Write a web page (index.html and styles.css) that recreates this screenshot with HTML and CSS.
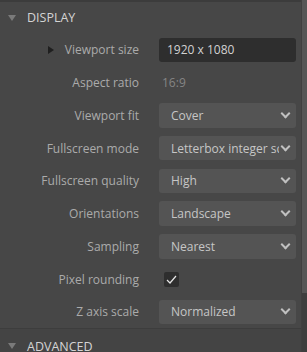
FILE: index.html
```html
<!DOCTYPE html>
<html lang="en">
<head>
    <meta charset="UTF-8">
    <meta name="viewport" content="width=device-width, initial-scale=1.0">
    <title>Project settings</title>
    <link rel="stylesheet" href="styles.css">
</head>
<body>
    <div class="panel">
        <div class="content">
            <div class="section-head">
                <span class="caret"></span>
                <span class="section-title">DISPLAY</span>
            </div>

            <div class="props">
                <div class="label"><span class="expander"></span>Viewport size</div>
                <div class="control"><div class="textbox">1920 x 1080</div></div>

                <div class="label">Aspect ratio</div>
                <div class="control"><span class="readonly">16:9</span></div>

                <div class="label">Viewport fit</div>
                <div class="control"><div class="dropdown"><span class="value">Cover</span><span class="chev"></span></div></div>

                <div class="label">Fullscreen mode</div>
                <div class="control"><div class="dropdown"><span class="value">Letterbox integer scale</span><span class="chev"></span></div></div>

                <div class="label">Fullscreen quality</div>
                <div class="control"><div class="dropdown"><span class="value">High</span><span class="chev"></span></div></div>

                <div class="label">Orientations</div>
                <div class="control"><div class="dropdown"><span class="value">Landscape</span><span class="chev"></span></div></div>

                <div class="label">Sampling</div>
                <div class="control"><div class="dropdown"><span class="value">Nearest</span><span class="chev"></span></div></div>

                <div class="label">Pixel rounding</div>
                <div class="control">
                    <div class="checkbox">
                        <svg width="11" height="9" viewBox="0 0 11 9"><path d="M1 5 L4 8 L10 1" fill="none" stroke="#e6e6e6" stroke-width="1.2"/></svg>
                    </div>
                </div>

                <div class="label">Z axis scale</div>
                <div class="control"><div class="dropdown"><span class="value">Normalized</span><span class="chev"></span></div></div>
            </div>

            <div class="section-head lower">
                <span class="caret"></span>
                <span class="section-title">ADVANCED</span>
            </div>
        </div>
        <div class="scrollbar"><div class="thumb"></div></div>
    </div>
</body>
</html>
```

FILE: styles.css
```css
body {
    margin: 0;
    background-color: #474747;
    font-family: "Open Sans", "Noto Sans", sans-serif;
    font-size: 12px;
    color: #ababab;
    overflow: hidden;
}
.panel {
    display: flex;
    height: 352px;
}
.content {
    flex: 1;
    border-top: 2px solid #3c3c3c;
}
.section-head {
    display: flex;
    align-items: center;
    height: 31.6px;
    padding-left: 8px;
}
.section-head.lower {
    border-top: 1px solid #3d3d3d;
    background-color: #444444;
    height: 34px;
}
.caret {
    width: 0;
    height: 0;
    border-left: 4px solid transparent;
    border-right: 4px solid transparent;
    border-top: 6px solid #7a7a7a;
    margin-right: 11px;
}
.section-title {
    color: #d4d4d4;
    font-size: 12.5px;
}
.props {
    display: grid;
    grid-template-columns: 139px 137px;
    grid-auto-rows: 32.75px;
    column-gap: 20px;
}
.label {
    display: flex;
    align-items: center;
    justify-content: flex-end;
    white-space: nowrap;
}
.expander {
    width: 0;
    height: 0;
    border-top: 4.5px solid transparent;
    border-bottom: 4.5px solid transparent;
    border-left: 6px solid #1f1f1f;
    margin-right: 11px;
}
.control {
    display: flex;
    align-items: center;
}
.textbox {
    width: 100%;
    height: 24px;
    line-height: 24px;
    background-color: #2e2e2e;
    border-radius: 3px;
    padding-left: 8px;
    box-sizing: border-box;
    color: #d2d2d2;
}
.readonly {
    padding-left: 3px;
    color: #858585;
}
.dropdown {
    width: 100%;
    height: 24.5px;
    background-color: #545454;
    border-radius: 3px;
    display: flex;
    align-items: center;
    padding: 0 7px 0 12px;
    box-sizing: border-box;
    color: #c6c6c6;
}
.value {
    flex: 1;
    overflow: hidden;
    white-space: nowrap;
}
.chev {
    width: 5px;
    height: 5px;
    border-right: 2px solid #c0c0c0;
    border-bottom: 2px solid #c0c0c0;
    transform: rotate(45deg);
    margin: -4px 0 0 3px;
}
.checkbox {
    width: 15px;
    height: 15px;
    margin-left: 5px;
    background-color: #2e2e2e;
    border-radius: 2px;
    display: flex;
    align-items: center;
    justify-content: center;
}
.scrollbar {
    width: 5px;
    background-color: #3e3e3e;
    border-left: 1px solid #404040;
}
.thumb {
    height: 293px;
    background-color: #565656;
}
```
